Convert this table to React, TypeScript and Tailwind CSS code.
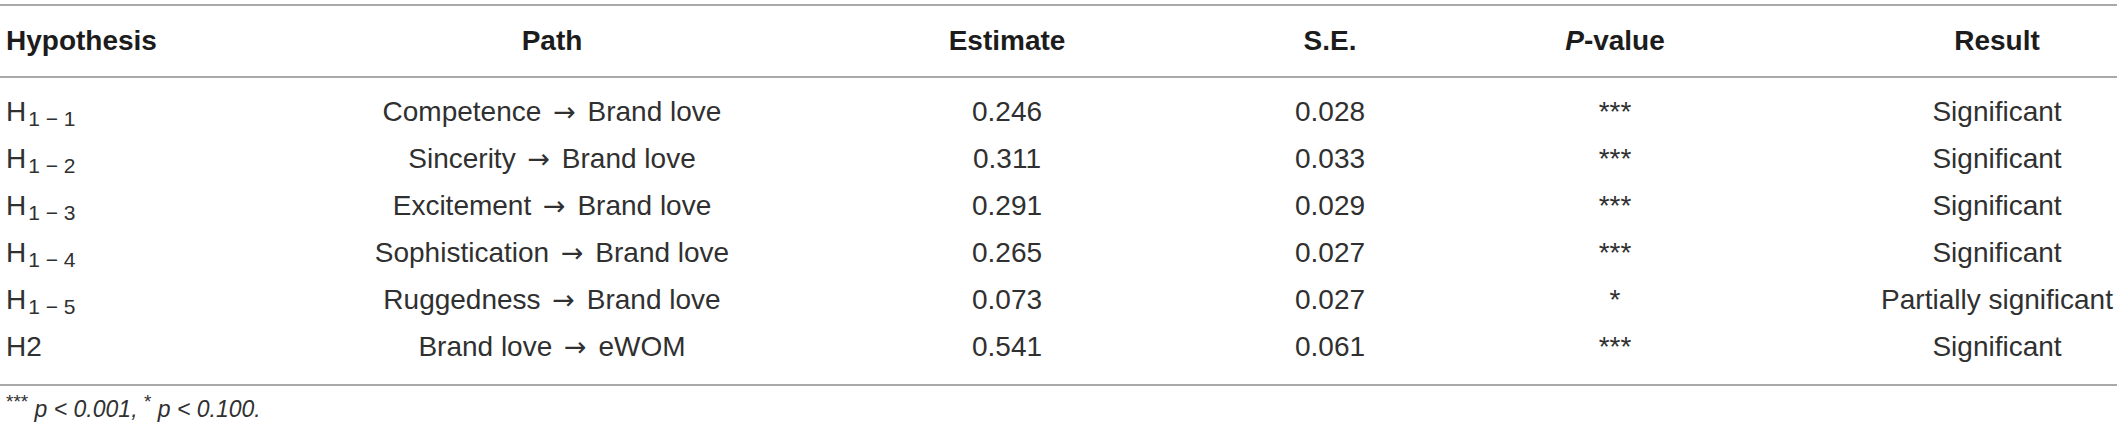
import React from 'react';

interface Row {
  sub?: string;
  hyp: string;
  from: string;
  to: string;
  estimate: string;
  se: string;
  p: string;
  result: string;
}

const rows: Row[] = [
  { hyp: 'H', sub: '1 − 1', from: 'Competence', to: 'Brand love', estimate: '0.246', se: '0.028', p: '***', result: 'Significant' },
  { hyp: 'H', sub: '1 − 2', from: 'Sincerity', to: 'Brand love', estimate: '0.311', se: '0.033', p: '***', result: 'Significant' },
  { hyp: 'H', sub: '1 − 3', from: 'Excitement', to: 'Brand love', estimate: '0.291', se: '0.029', p: '***', result: 'Significant' },
  { hyp: 'H', sub: '1 − 4', from: 'Sophistication', to: 'Brand love', estimate: '0.265', se: '0.027', p: '***', result: 'Significant' },
  { hyp: 'H', sub: '1 − 5', from: 'Ruggedness', to: 'Brand love', estimate: '0.073', se: '0.027', p: '*', result: 'Partially significant' },
  { hyp: 'H2', from: 'Brand love', to: 'eWOM', estimate: '0.541', se: '0.061', p: '***', result: 'Significant' },
];

// fixed column widths so each centred column lands where the figure has it
const cols = 'grid grid-cols-[200px_704px_206px_440px_130px_437px]';

export default function App() {
  return (
    <div className="w-[2117px] h-[433px] bg-white pt-[4px] font-['Liberation_Sans',Arial,sans-serif] text-[#303030]">
      {/* Header */}
      <div className={`${cols} h-[74px] items-center border-t-2 border-b-2 border-[#a9a9a9] text-[28px] font-bold text-[#1c1c1c]`}>
        <div className="pl-[6px]">Hypothesis</div>
        <div className="text-center">Path</div>
        <div className="text-center">Estimate</div>
        <div className="text-center">S.E.</div>
        <div className="text-center">
          <i>P</i>-value
        </div>
        <div className="pl-[197px] text-center">Result</div>
      </div>

      {/* Body */}
      <div className="pt-[10px] pb-[14px] border-b-2 border-[#a9a9a9] text-[28px]">
        {rows.map((r) => (
          <div key={r.from + r.to} className={`${cols} h-[47px] items-center`}>
            <div className="pl-[6px]">
              {r.hyp}
              {r.sub && <sub className="text-[21px] ml-[2px]">{r.sub}</sub>}
            </div>
            <div className="text-center">
              {r.from} <span className="mx-[4px] font-['DejaVu_Sans'] text-[27px]">→</span> {r.to}
            </div>
            <div className="text-center">{r.estimate}</div>
            <div className="text-center">{r.se}</div>
            <div className="text-center">{r.p}</div>
            <div className="pl-[197px] text-center whitespace-nowrap">{r.result}</div>
          </div>
        ))}
      </div>

      {/* Footnote */}
      <p className="mt-[6px] pl-[6px] text-[23px] leading-[34px] italic">
        <sup className="text-[19px] not-italic">***</sup> p &lt; 0.001, <sup className="text-[19px] not-italic">*</sup> p &lt; 0.100.
      </p>
    </div>
  );
}
